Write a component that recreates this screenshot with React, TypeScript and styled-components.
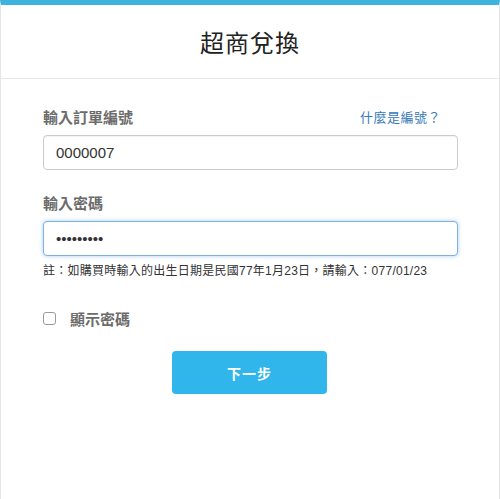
import React from "react";
import styled, {createGlobalStyle} from "styled-components";

const GlobalStyle = createGlobalStyle`
  html, body {
    margin: 0;
    padding: 0;
    background: #ffffff;
  }
  body {
    font-family: "Helvetica Neue", "Liberation Sans", Arial, "Noto Sans CJK TC", sans-serif;
  }
`;

const Page = styled.div`
  width: 500px;
  height: 499px;
  box-sizing: border-box;
  border-top: 5px solid #3cb4de;
  border-left: 1px solid #e6e6e6;
  border-right: 1px solid #e6e6e6;
  background: #fff;
`;

const Header = styled.div`
  height: 73px;
  display: flex;
  align-items: center;
  justify-content: center;
  border-bottom: 1px solid #e8e8e8;
`;

const Title = styled.h1`
  margin: 0;
  font-size: 24px;
  font-weight: 400;
  color: #222;
  letter-spacing: 1px;
`;

const Form = styled.form`
  padding: 26px 42px 0 41px;
  display: flex;
  flex-direction: column;
`;

const LabelRow = styled.div`
  display: flex;
  justify-content: space-between;
  align-items: center;
  height: 22px;
  margin-bottom: 8px;
`;

const Label = styled.label`
  font-size: 15px;
  font-weight: 700;
  color: #6b6b6b;
  padding-left: 1px;
`;

const HelpLink = styled.a`
  font-size: 13px;
  color: #3478b8;
  text-decoration: none;
  margin-right: 16px;
  letter-spacing: 0.5px;
`;

const Input = styled.input<{$focused?: boolean}>`
  box-sizing: border-box;
  width: 415px;
  height: 35px;
  padding: 0 12px;
  font-size: 15px;
  color: #333;
  font-family: "Liberation Sans", Arial, sans-serif;
  border: 1px solid ${(p) => (p.$focused ? "#7fb0e4" : "#cccccc")};
  border-radius: 4px;
  box-shadow: ${(p) =>
    p.$focused ? "0 0 4px rgba(102, 160, 230, 0.55)" : "inset 0 1px 1px rgba(0,0,0,0.05)"};
  outline: none;
  margin-left: 1px;
`;

const Field = styled.div<{$gap?: number}>`
  display: flex;
  flex-direction: column;
  margin-bottom: ${(p) => p.$gap ?? 0}px;
`;

const Note = styled.p`
  margin: 5px 0 0 1px;
  font-size: 12px;
  letter-spacing: 0.25px;
  color: #333;
`;

const CheckRow = styled.label`
  display: flex;
  align-items: center;
  margin-top: 30px;
  padding-left: 1px;
  gap: 14px;
`;

const CheckBox = styled.span`
  width: 11px;
  height: 11px;
  border: 1px solid #9a9a9a;
  border-radius: 3px;
  background: #fff;
`;

const CheckText = styled.span`
  font-size: 15px;
  font-weight: 700;
  color: #6b6b6b;
`;

const ButtonRow = styled.div`
  display: flex;
  justify-content: center;
  margin-top: 22px;
`;

const NextButton = styled.button`
  width: 155px;
  height: 43px;
  border: none;
  border-radius: 4px;
  background: #30b6ea;
  color: #fff;
  font-size: 14px;
  font-weight: 700;
  font-family: inherit;
  letter-spacing: 1px;
`;

export default function App() {
    return (
        <>
            <GlobalStyle/>
            <Page>
                <Header>
                    <Title>超商兌換</Title>
                </Header>
                <Form onSubmit={(e) => e.preventDefault()}>
                    <Field $gap={21}>
                        <LabelRow>
                            <Label>輸入訂單編號</Label>
                            <HelpLink href="#">什麼是編號？</HelpLink>
                        </LabelRow>
                        <Input defaultValue="0000007"/>
                    </Field>
                    <Field>
                        <LabelRow>
                            <Label>輸入密碼</Label>
                        </LabelRow>
                        <Input type="password" defaultValue="077012300" $focused/>
                        <Note>註：如購買時輸入的出生日期是民國77年1月23日，請輸入：077/01/23</Note>
                    </Field>
                    <CheckRow>
                        <CheckBox/>
                        <CheckText>顯示密碼</CheckText>
                    </CheckRow>
                    <ButtonRow>
                        <NextButton type="submit">下一步</NextButton>
                    </ButtonRow>
                </Form>
            </Page>
        </>
    );
}
